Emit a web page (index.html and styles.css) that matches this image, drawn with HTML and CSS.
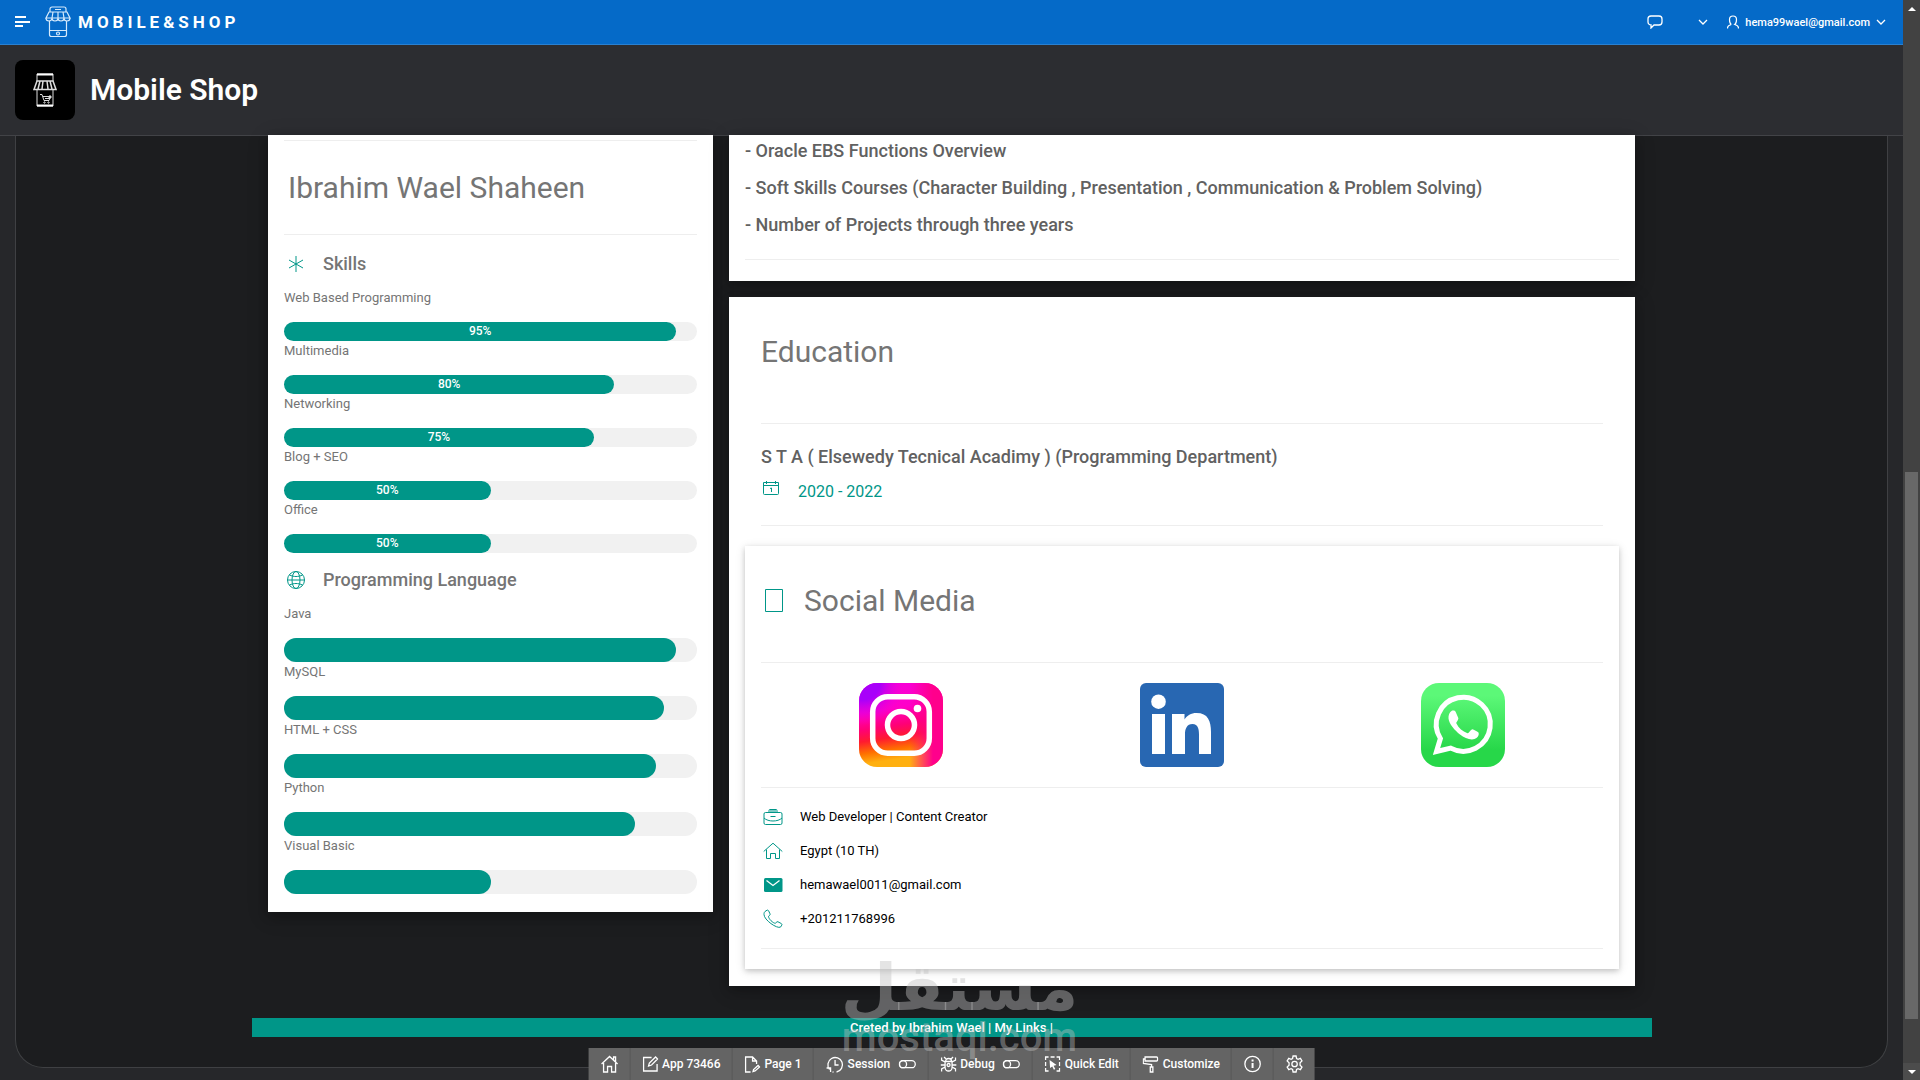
FILE: index.html
```html
<!DOCTYPE html>
<html lang="en">
<head>
    <meta charset="UTF-8">
    <meta name="viewport" content="width=device-width, initial-scale=1.0">
    <title>Mobile Shop</title>
    <link rel="stylesheet" href="styles.css">
</head>
<body>
<div class="app">
    <header class="header">
        <button type="button" class="icon-btn menu-btn" aria-label="Menu">
            <svg width="16" height="12" viewBox="0 0 16 12"><path d="M0 1h11M0 6h15M0 10h8" stroke="#fff" stroke-width="1.800"/></svg>
        </button>
        <a href="#" class="brand">
            <svg width="26" height="32" viewBox="0 0 26 32" fill="none" stroke="#d6eafc" stroke-width="1.200">
                <path d="M5 6V3a2 2 0 0 1 2-2h12a2 2 0 0 1 2 2v3M10 3.500h6M4 6h18l3 6H1zM8 6l-1 6M13 6v6M18 6l1 6"/>
                <path d="M1 12a3 3 0 0 0 6 0 3 3 0 0 0 6 0 3 3 0 0 0 6 0 3 3 0 0 0 6 0"/>
                <path d="M4.500 15v13.500a2 2 0 0 0 2 2h13a2 2 0 0 0 2-2V15M4.500 24.500h17"/><circle cx="13" cy="27.500" r="1.500"/>
            </svg>
            <span>MOBILE&amp;SHOP</span>
        </a>
        <nav class="header-nav">
            <button type="button" class="icon-btn" aria-label="Feedback">
                <svg width="16" height="14" viewBox="0 0 16 14" fill="none" stroke="#fff" stroke-width="1.300"><path d="M4 1h8a3 3 0 0 1 3 3v3a3 3 0 0 1-3 3H7l-3 3v-3a3 3 0 0 1-3-3V4a3 3 0 0 1 3-3z"/></svg>
            </button>
            <button type="button" class="icon-btn nav-chevron" aria-label="More">
                <svg width="10" height="6" viewBox="0 0 10 6" fill="none" stroke="#fff" stroke-width="1.300"><path d="M1 1l4 4 4-4"/></svg>
            </button>
            <button type="button" class="icon-btn user-btn">
                <svg width="12" height="15" viewBox="0 0 12 15" fill="none" stroke="#fff" stroke-width="1.200"><path d="M4.300 9.500C2.500 8.500 2.500 6 2.500 4.500a3.500 3.500 0 0 1 7 0c0 1.500 0 4-1.800 5l2.300 1c1 .5 1.500 1.500 1.500 3M4.300 9.500L2 10.500c-1 .5-1.500 1.500-1.500 3"/></svg>
                <span>hema99wael@gmail.com</span>
                <svg width="10" height="6" viewBox="0 0 10 6" fill="none" stroke="#fff" stroke-width="1.300"><path d="M1 1l4 4 4-4"/></svg>
            </button>
        </nav>
    </header>

    <div class="title-bar">
        <div class="app-icon">
            <svg width="24" height="34" viewBox="0 0 24 34" fill="none" stroke="#ddd">
                <path d="M4 8V1h16v7M4 17v16h16V17"/><path d="M4 1.500h16M4 32.500h16" stroke="#fff" stroke-width="2"/>
                <path d="M4 8h16l3 8.500H1zM7 8l-2 8M10 8l-1 8M14 8l1 8M17 8l2 8" stroke-width="1.500"/>
                <path d="M7 21.500h2l2 6h5l1.500-4H10M12 25.500h5"/><circle cx="11.500" cy="29.500" r=".7"/><circle cx="15.500" cy="29.500" r=".7"/><circle cx="17" cy="24" r="1.200" fill="#ddd"/>
            </svg>
        </div>
        <h1>Mobile Shop</h1>
    </div>

    <main class="main">
        <div class="panel">
            <div class="resume">
                <div class="col">
                    <section class="card profile">
                        <hr>
                        <h2>Ibrahim Wael Shaheen</h2>
                        <hr>
                        <h3>
                            <svg width="18" height="18" viewBox="0 0 18 18" class="icon"><path d="M9 1v16M2 5l14 8M16 5L2 13"/></svg>
                            Skills
                        </h3>
                        <p class="skill">Web Based Programming</p>
                        <div class="bar"><div class="fill" style="width:95%">95%</div></div>
                        <p class="skill">Multimedia</p>
                        <div class="bar"><div class="fill" style="width:80%">80%</div></div>
                        <p class="skill">Networking</p>
                        <div class="bar"><div class="fill" style="width:75%">75%</div></div>
                        <p class="skill">Blog + SEO</p>
                        <div class="bar"><div class="fill" style="width:50%">50%</div></div>
                        <p class="skill">Office</p>
                        <div class="bar"><div class="fill" style="width:50%">50%</div></div>

                        <h3>
                            <svg width="20" height="20" viewBox="0 0 20 20" class="icon"><circle cx="10" cy="10" r="8.500"/><ellipse cx="10" cy="10" rx="4" ry="8.500"/><path d="M1.500 10h17M3.500 5c4 2 9 2 13 0M3.500 15c4-2 9-2 13 0"/></svg>
                            Programming Language
                        </h3>
                        <p class="skill">Java</p>
                        <div class="bar bar-lg"><div class="fill" style="width:95%"></div></div>
                        <p class="skill">MySQL</p>
                        <div class="bar bar-lg"><div class="fill" style="width:92%"></div></div>
                        <p class="skill">HTML + CSS</p>
                        <div class="bar bar-lg"><div class="fill" style="width:90%"></div></div>
                        <p class="skill">Python</p>
                        <div class="bar bar-lg"><div class="fill" style="width:85%"></div></div>
                        <p class="skill">Visual Basic</p>
                        <div class="bar bar-lg"><div class="fill" style="width:50%"></div></div>
                    </section>
                </div>

                <div class="col">
                    <section class="card courses">
                        <p>- Oracle EBS Functions Overview</p>
                        <p>- Soft Skills Courses (Character Building , Presentation , Communication &amp; Problem Solving)</p>
                        <p>- Number of Projects through three years</p>
                        <hr>
                    </section>

                    <section class="card details">
                        <div class="education">
                            <h2>Education</h2>
                            <hr>
                            <h4>S T A ( Elsewedy Tecnical Acadimy ) (Programming Department)</h4>
                            <p class="dates">
                                <svg width="18" height="16" viewBox="0 0 18 16" class="icon"><path d="M1.500 2.500h15v11a1 1 0 0 1-1 1h-13a1 1 0 0 1-1-1zM1.500 5.500h15M4.500 1v3M13.500 1v3M8 8.500l1.500-.5v4"/></svg>
                                2020 - 2022
                            </p>
                            <hr>
                        </div>

                        <div class="social">
                            <h2>
                                <svg width="20" height="24" viewBox="0 0 20 24" class="icon"><path d="M1.500.5h17v22h-17z"/></svg>
                                Social Media
                            </h2>
                            <hr>
                            <div class="links">
                                <a href="#" aria-label="Instagram">
                                    <svg width="84" height="84" viewBox="0 0 84 84">
                                        <defs>
                                            <linearGradient id="ig" x1=".35" y1="0" x2=".5" y2="1">
                                                <stop offset="0" stop-color="#f800d8"/><stop offset=".3" stop-color="#ff00c8"/><stop offset=".5" stop-color="#ff0078"/><stop offset=".64" stop-color="#ff1a30"/><stop offset=".78" stop-color="#ff7000"/><stop offset=".9" stop-color="#ffb010"/>
                                            </linearGradient>
                                            <radialGradient id="igTop" cx=".05" cy="0" r=".5">
                                                <stop offset=".4" stop-color="#a800fa"/><stop offset="1" stop-color="#f800d8" stop-opacity="0"/>
                                            </radialGradient>
                                            <linearGradient id="igSide" x1="0" y1="0" x2="1" y2="0">
                                                <stop offset=".6" stop-color="#ff0088" stop-opacity="0"/><stop offset=".88" stop-color="#ff008c"/>
                                            </linearGradient>
                                        </defs>
                                        <rect width="84" height="84" rx="18" fill="url(#ig)"/>
                                        <rect width="84" height="84" rx="18" fill="url(#igTop)"/>
                                        <rect width="84" height="84" rx="18" fill="url(#igSide)"/>
                                        <g fill="none" stroke="#fff" stroke-width="5.500"><rect x="13.700" y="13.700" width="56.600" height="56.600" rx="15"/><circle cx="42" cy="42" r="13.500"/></g>
                                        <circle cx="58.500" cy="25.500" r="3.800" fill="#fff"/>
                                    </svg>
                                </a>
                                <a href="#" aria-label="LinkedIn">
                                    <svg width="84" height="84" viewBox="0 0 84 84">
                                        <rect width="84" height="84" rx="6" fill="#2867b2"/>
                                        <g fill="#fff"><circle cx="18.500" cy="18.700" r="7.300"/><path d="M12 31h13v40H12zM32 31h12.500v5.500C47 32.500 51 30 56.500 30 68 30 71 38 71 49v22H59V51.500c0-5-.8-10.500-6.500-10.500S45 46 45 51v20H32z"/></g>
                                    </svg>
                                </a>
                                <a href="#" aria-label="WhatsApp">
                                    <svg width="84" height="84" viewBox="0 0 84 84">
                                        <defs><linearGradient id="wa" x1="0" y1="0" x2="0" y2="1"><stop offset=".15" stop-color="#5cf878"/><stop offset=".8" stop-color="#27d749"/></linearGradient></defs>
                                        <rect width="84" height="84" rx="18" fill="url(#wa)"/>
                                        <path d="M15.500 68.500l3.900-13a27 27 0 1 1 10.300 9.600z" fill="none" stroke="#fff" stroke-width="5"/>
                                        <path d="M30.500 28c1.500-.8 3.500-.5 4.200 1l2.600 6c.5 1.500-2.300 4.500-2 5.300 2.500 5 6.200 8 11.200 10 1.300.3 3.500-4.300 5-4 1 .3 5.500 2.500 6 3.200.9 3-1 5.500-4 6.500-4 1.500-10-1-14.500-4.500C34 47.500 28 41 27.500 35.500c-.3-3 1-6.200 3-7.500z" fill="#fff"/>
                                    </svg>
                                </a>
                            </div>
                            <hr>
                            <ul class="contact">
                                <li>
                                    <svg width="20" height="18" viewBox="0 0 20 18" class="icon"><rect x="1" y="4.500" width="18" height="12" rx="1.500"/><path d="M6 4.500V2.500a1 1 0 0 1 1-1h6a1 1 0 0 1 1 1v2M7 3h6M1 10c4 4 14 4 18 0M7.500 8.500h5"/></svg>
                                    Web Developer | Content Creator
                                </li>
                                <li>
                                    <svg width="20" height="18" viewBox="0 0 20 18" class="icon"><path d="M.7 9.500L10 1.200l9.300 8.300M3.500 7.500v9h4v-5h5v5h4v-9"/></svg>
                                    Egypt (10 TH)
                                </li>
                                <li>
                                    <svg width="20" height="16" viewBox="0 0 20 16"><rect x="1" y="1" width="18.500" height="14" rx="1.500" fill="#009688"/><path d="M3.500 3.500l6.500 5 6.500-5" fill="none" stroke="#fff" stroke-width="1.300"/></svg>
                                    hemawael0011@gmail.com
                                </li>
                                <li>
                                    <svg width="20" height="20" viewBox="0 0 20 20" class="icon"><path d="M2 2.500l2-1.300c.6-.3 1.200 0 1.600.6L7 4.800c.3.7.1 1.300-.5 1.700l-1 .8c0 2.500 4.500 7 7 7l.8-1c.4-.6 1-.8 1.700-.5l3.200 1.700c.7.400.9 1 .6 1.600l-1.300 2C14 20 1 11 1 5.500 1 4 1.300 3 2 2.500z"/></svg>
                                    +201211768996
                                </li>
                            </ul>
                            <hr>
                        </div>
                    </section>
                </div>
            </div>
            <footer class="footer">Creted by Ibrahim Wael | <a href="#">My Links</a> |</footer>
        </div>
    </main>

    <div class="dev-toolbar">
        <button type="button" aria-label="Home">
            <svg width="18" height="18" viewBox="0 0 18 18"><path d="M1 9l8-7.500L17 9M3 8v9h4v-5.500h4V17h4V8M13 5V2h2v5"/></svg>
        </button>
        <button type="button">
            <svg width="16" height="16" viewBox="0 0 16 16"><path d="M9 1.500H1v13.500h13.500V8M6 10l.8-3L13 1l2 2-6 6z"/></svg>
            App 73466
        </button>
        <button type="button">
            <svg width="16" height="17" viewBox="0 0 16 17"><path d="M6 16H1V1h7l4 4v3M8 1v4h4M8.500 15.500l.5-2 4.500-4 1.500 1.500-4.500 4z"/></svg>
            Page 1
        </button>
        <button type="button">
            <svg width="18" height="17" viewBox="0 0 18 17"><path d="M4 13.500A7.300 7.300 0 1 1 11 16M9.500 4v5H13M1 12h4v4M7 16l1 .2"/></svg>
            Session
            <svg width="18" height="9" viewBox="0 0 18 9" class="toggle"><rect x=".7" y=".7" width="16" height="7" rx="3.500"/><circle cx="4.500" cy="4.200" r="3.500"/></svg>
        </button>
        <button type="button">
            <svg width="16" height="16" viewBox="0 0 16 16"><path d="M4.500 5.500h7v6a3.500 3.500 0 0 1-7 0zM5 5.500a3 3 0 0 1 6 0M1 1.500v2.500l3.500 2M15 1.500V4l-3.500 2M0 9h4.500M11.500 9H16M1 15.500V13l3.500-2M15 15.500V13l-3.500-2M3.500 1L6 3.500M12.500 1L10 3.500"/><circle cx="8" cy="9" r="1.500"/></svg>
            Debug
            <svg width="18" height="9" viewBox="0 0 18 9" class="toggle"><rect x=".7" y=".7" width="16" height="7" rx="3.500"/><circle cx="4.500" cy="4.200" r="3.500"/></svg>
        </button>
        <button type="button">
            <svg width="16" height="16" viewBox="0 0 16 16"><path d="M1 4V1h3M6 1h4M12 1h3v3M15 6v4M15 12v3h-3M1 6v4M1 12v3h3"/><path d="M5 4l7 5-3 .8 1.700 3.200-1.400.7L7.700 10.500 5.500 12z" fill="#fff" stroke="none"/></svg>
            Quick Edit
        </button>
        <button type="button">
            <svg width="16" height="17" viewBox="0 0 16 17"><path d="M2.500 1H14a1 1 0 0 1 1 1v2a1 1 0 0 1-1 1H2.500zM2.500 3H.7v4.500L9 8.500V11M7.700 11h2.600v5H7.700z"/></svg>
            Customize
        </button>
        <button type="button" aria-label="Info">
            <svg width="18" height="18" viewBox="0 0 18 18"><circle cx="9" cy="9" r="7.700"/><path d="M9 8v5M9 4.500v2" stroke-width="2"/></svg>
        </button>
        <button type="button" aria-label="Settings">
            <svg width="18" height="18" viewBox="0 0 18 18"><path d="M7.500 1h3l.5 2.500 1.500.8 2.300-.9 1.600 2.600-1.900 1.700v2.600l1.900 1.700-1.600 2.600-2.300-.9-1.500.8-.5 2.500h-3L7 14.500l-1.500-.8-2.300.9L1.600 12l1.900-1.700V7.700L1.600 6l1.600-2.600 2.300.9L7 3.500z"/><circle cx="9" cy="9" r="2.700"/></svg>
        </button>
    </div>

    <div class="watermark" aria-hidden="true">
        <span class="watermark-ar" lang="ar" dir="rtl">مستقل</span>
        <span class="watermark-en">mostaql.com</span>
    </div>
</div>

<div class="scrollbar" aria-hidden="true">
    <div class="arrow arrow-up"></div>
    <div class="track"><div class="thumb"></div></div>
    <div class="arrow arrow-down"></div>
</div>
</body>
</html>
```

FILE: styles.css
```css
* {
    box-sizing: border-box;
}
body {
    display: flex;
    height: 100vh;
    margin: 0;
    overflow: hidden;
    background-color: #26272a;
    font-family: Roboto, "Liberation Sans", sans-serif;
    font-size: 13px;
    line-height: 20px;
}
h1, h2, h3, h4, p, ul {
    margin: 0;
    padding: 0;
}
svg {
    display: block;
    flex-shrink: 0;
}
a {
    color: inherit;
    text-decoration: none;
}
button {
    font-family: inherit;
    color: #fff;
    background: none;
    border: none;
    padding: 0;
    cursor: pointer;
}
hr {
    margin: 0;
    border: none;
    border-top: 1px solid #eee;
}
.app {
    position: relative;
    display: flex;
    flex: 1;
    flex-direction: column;
    min-width: 0;
}

/* header */
.header {
    display: flex;
    align-items: center;
    height: 45px;
    padding: 0 17px 0 15px;
    background-color: #056ac8;
    border-bottom: 1px solid #2a80d0;
    color: #fff;
}
.icon-btn {
    display: flex;
    align-items: center;
}
.brand {
    display: flex;
    align-items: center;
    gap: 7px;
    margin-left: 14px;
    font-size: 17px;
    font-weight: 700;
    letter-spacing: 4px;
}
.header-nav {
    display: flex;
    align-items: center;
    margin-left: auto;
}
.nav-chevron {
    margin: 0 19px 0 35px;
}
.user-btn {
    gap: 6px;
    font-size: 11px;
    font-weight: 500;
}

/* title */
.title-bar {
    display: flex;
    align-items: center;
    gap: 15px;
    height: 91px;
    padding: 0 15px;
    background-color: #2c2d31;
    border-bottom: 1px solid #424347;
    color: #fff;
}
.title-bar h1 {
    font-size: 30px;
    font-weight: 600;
    line-height: 40px;
}
.app-icon {
    display: flex;
    align-items: center;
    justify-content: center;
    width: 60px;
    height: 60px;
    border-radius: 8px;
    background-color: #000;
}

/* page body */
.main {
    display: flex;
    flex: 1;
    min-height: 0;
    padding: 0 15px 12px;
}
.panel {
    flex: 1;
    background-color: #1c1d1f;
    border: 1px solid #3f4043;
    border-top: none;
    border-radius: 0 0 28px 28px;
}
.resume {
    display: grid;
    grid-template-columns: 1fr 2fr;
    max-width: 1383px;
    margin: -1px auto 32px;
}
.col {
    padding: 0 8px;
}
.card {
    padding: 0 16px;
    background-color: #fff;
    color: #757575;
    box-shadow: 0 4px 10px 0 rgba(0, 0, 0, 0.2), 0 4px 20px 0 rgba(0, 0, 0, 0.19);
}
.card h2 {
    font-size: 30px;
    font-weight: 400;
    line-height: 45px;
}
.icon {
    fill: none;
    stroke: #009688;
}

/* left column */
.profile {
    padding-top: 5px;
    padding-bottom: 18px;
}
.profile h2 {
    margin: 24px 4px;
}
.profile h2 + hr {
    margin-bottom: 5px;
}
.profile h3 {
    display: grid;
    grid-template-columns: 23px auto;
    align-items: center;
    justify-items: center;
    justify-content: start;
    column-gap: 16px;
    height: 48px;
    margin-top: 3px;
    font-size: 18px;
    font-weight: 500;
}
.skill {
    padding-bottom: 14px;
}
.bar {
    height: 19px;
    border-radius: 32px;
    background-color: #f1f1f1;
}
.bar-lg {
    height: 24px;
}
.fill {
    height: 100%;
    border-radius: 32px;
    background-color: #009688;
    color: #fff;
    font-size: 12px;
    font-weight: 500;
    line-height: 18px;
    text-align: center;
}

/* right column */
.courses {
    margin-bottom: 16px;
    padding-top: 5px;
    padding-bottom: 21px;
}
.courses p {
    margin-bottom: 16px;
    color: #616161;
    font-size: 18px;
    font-weight: 500;
    line-height: 21px;
}
.courses hr {
    margin-top: 24px;
}
.details {
    padding-bottom: 17px;
}
.education {
    padding: 32px 16px 20px;
}
.education h2 {
    margin-bottom: 49px;
}
.education h4 {
    margin: 21px 0 11px;
    color: #616161;
    font-size: 18px;
    font-weight: 500;
    line-height: 24px;
}
.dates {
    display: flex;
    gap: 18px;
    margin-bottom: 21px;
    padding-left: 1px;
    color: #009688;
    font-size: 16px;
    line-height: 24px;
}
.social {
    padding: 32px 16px 20px;
    box-shadow: 0 2px 5px 0 rgba(0, 0, 0, 0.16), 0 2px 10px 0 rgba(0, 0, 0, 0.12);
}
.social h2 {
    display: flex;
    align-items: center;
    gap: 20px;
    margin-bottom: 39px;
    padding-left: 3px;
}
.links {
    display: grid;
    grid-template-columns: repeat(3, 1fr);
    justify-items: center;
    padding: 20px 0;
}
.contact {
    padding: 12px 2px;
    color: #000;
    list-style: none;
}
.contact li {
    display: flex;
    align-items: center;
    gap: 17px;
    height: 34px;
}
.footer {
    max-width: 1400px;
    margin: 0 auto;
    background-color: #009688;
    color: #fff;
    font-weight: 500;
    line-height: 19px;
    text-align: center;
}

/* developer toolbar, floats over the page */
.dev-toolbar {
    position: absolute;
    bottom: 0;
    left: 50%;
    display: flex;
    height: 32px;
    background-color: #646464;
    transform: translateX(-50%);
}
.dev-toolbar button {
    display: flex;
    align-items: center;
    gap: 4px;
    padding: 0 11px 0 12px;
    font-size: 12px;
    font-weight: 500;
}
.dev-toolbar button + button {
    border-left: 1px solid #585858;
}
.dev-toolbar svg {
    fill: none;
    stroke: #fff;
    stroke-width: 1.3;
}
.dev-toolbar .toggle {
    margin-left: 4px;
}

/* watermark, lies over the page and the toolbar */
.watermark {
    position: absolute;
    bottom: 22px;
    left: 50%;
    display: flex;
    flex-direction: column;
    align-items: center;
    margin-left: 8px;
    color: rgba(192, 192, 192, 0.43);
    transform: translateX(-50%);
    pointer-events: none;
}
.watermark-ar {
    font-family: "DejaVu Sans", sans-serif;
    font-size: 65px;
    font-weight: 700;
    line-height: 60px;
}
.watermark-en {
    font-size: 40px;
    font-weight: 500;
    line-height: 40px;
}

/* scrollbar */
.scrollbar {
    display: flex;
    flex-direction: column;
    width: 17px;
    background-color: #424242;
}
.arrow {
    display: flex;
    align-items: center;
    justify-content: center;
    height: 17px;
}
.arrow::before {
    content: "";
    border: 4px solid transparent;
}
.arrow-up::before {
    border-top: none;
    border-bottom-color: #fff;
}
.arrow-down {
    background-color: #4c4c4c;
}
.arrow-down::before {
    border-bottom: none;
    border-top-color: #fff;
}
.track {
    display: flex;
    flex: 1;
    flex-direction: column;
    justify-content: flex-end;
    padding: 0 2px 44px;
}
.thumb {
    height: 547px;
    background-color: #686868;
}
```
